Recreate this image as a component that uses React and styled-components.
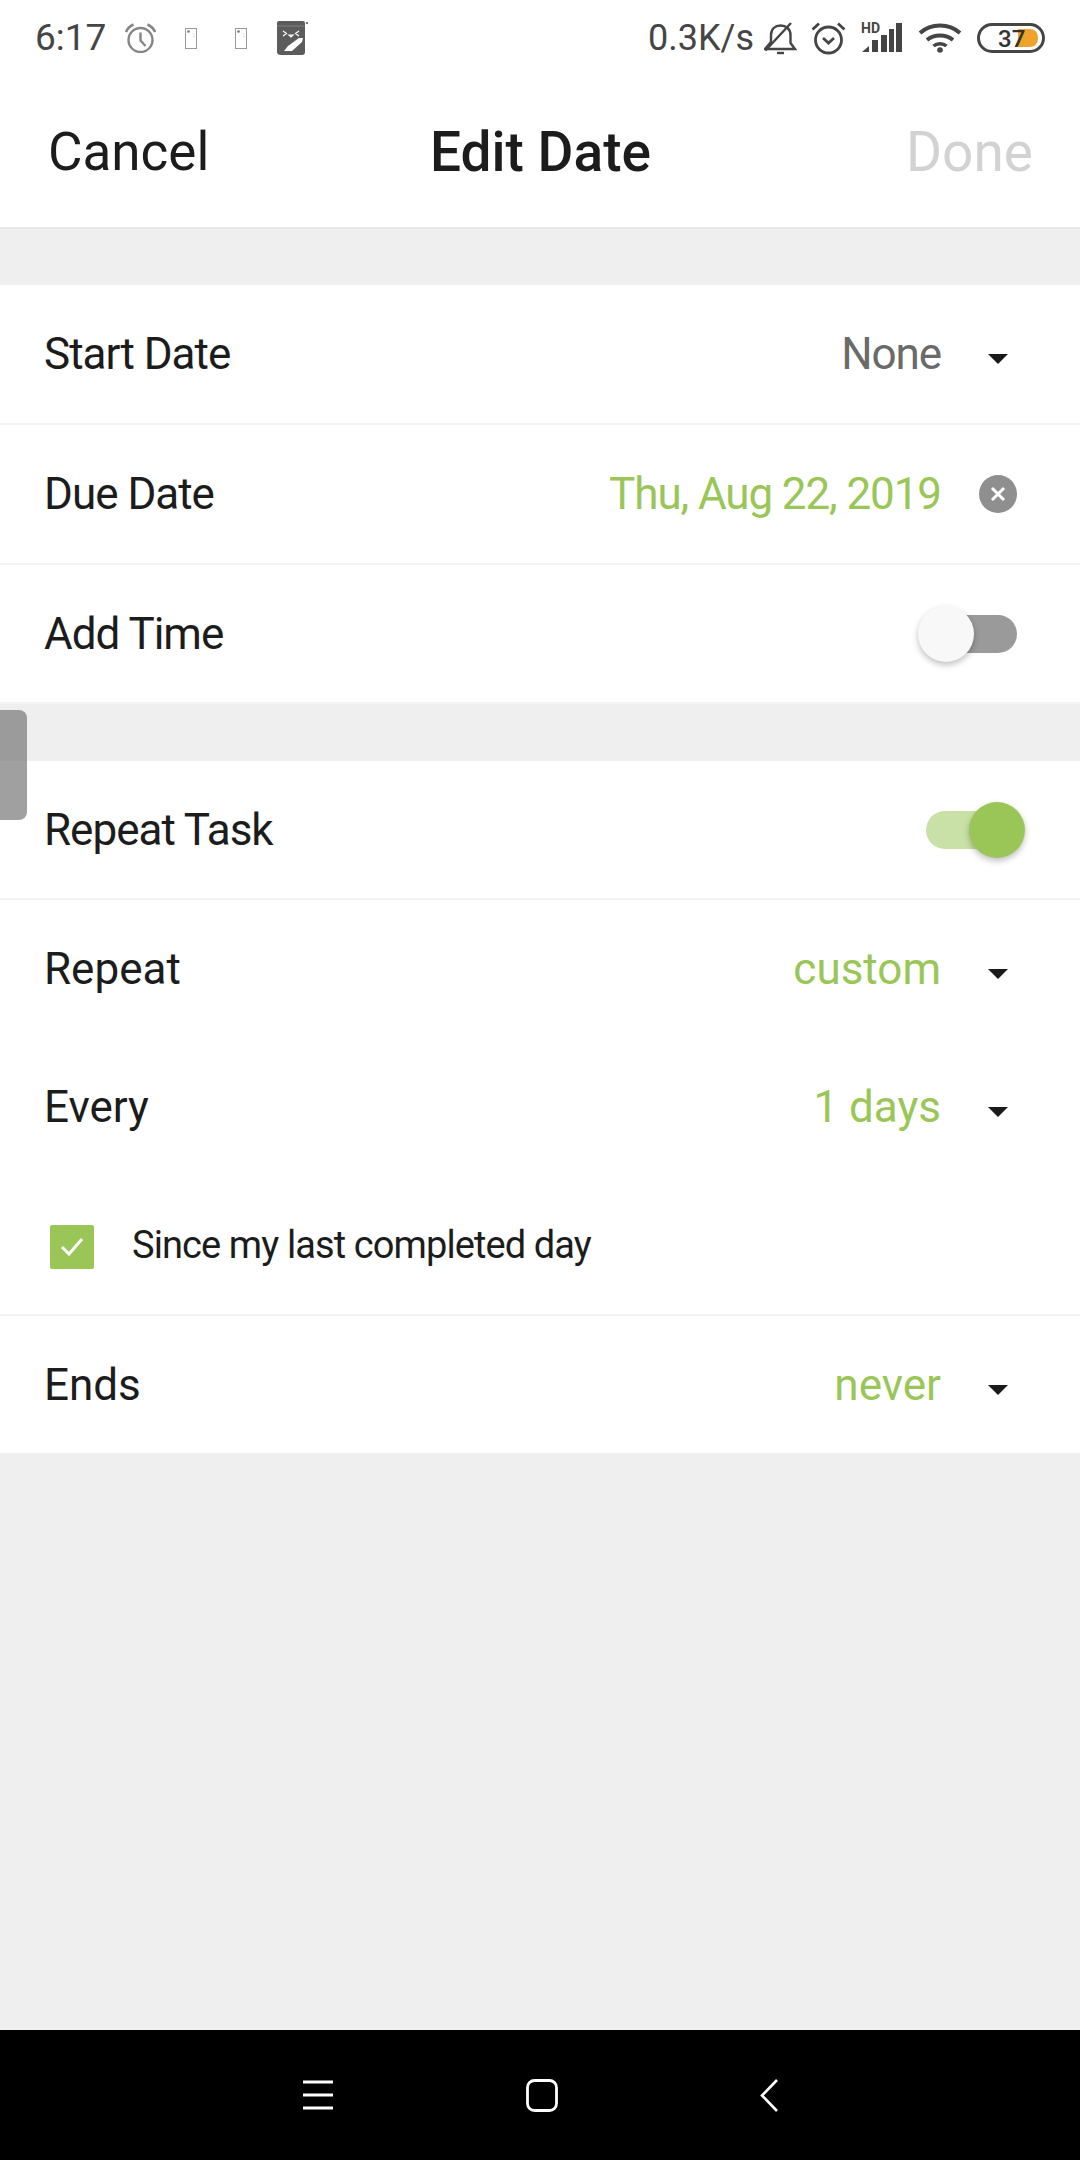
import React from "react";
import styled, { createGlobalStyle } from "styled-components";

const Global = createGlobalStyle`
  html, body { margin: 0; padding: 0; background: #efefef; }
  * { box-sizing: border-box; }
`;

const Page = styled.div`
  position: relative;
  width: 1080px;
  height: 2160px;
  display: flex;
  flex-direction: column;
  background: #efefef;
  font-family: Roboto, "Liberation Sans", sans-serif;
  color: #1c1c1c;
  overflow: hidden;
`;

const StatusBar = styled.div`
  height: 76px;
  background: #fff;
  display: flex;
  align-items: center;
  justify-content: space-between;
  padding: 0 35px 0 35px;
  color: #454545;
`;

const StatusGroup = styled.div`
  display: flex;
  align-items: center;
`;

const StatusText = styled.span`
  font-size: ${(p) => p.$size || 36}px;
  line-height: 76px;
`;

const Glyph = styled.svg`
  display: block;
  flex: none;
  margin-left: ${(p) => p.$ml || 0}px;
  margin-top: ${(p) => p.$mt || 0}px;
`;

const Header = styled.div`
  height: 153px;
  background: #fff;
  border-bottom: 2px solid #e9e9e9;
  display: grid;
  grid-template-columns: 1fr auto 1fr;
  align-items: center;
  padding: 0 47px 0 48px;
  margin-bottom: 56px;
`;

const HeaderButton = styled.span`
  color: ${(p) => (p.$disabled ? "#d2d2d2" : "#1c1c1c")};
  font-size: ${(p) => (p.$disabled ? 55 : 53)}px;
  justify-self: ${(p) => (p.$disabled ? "end" : "start")};
`;

const HeaderTitle = styled.span`
  font-weight: 500;
  font-size: 55px;
  color: #1c1c1c;
`;

const Section = styled.div`
  background: #fff;
  margin-bottom: ${(p) => p.$gap || 0}px;
`;

const Row = styled.div`
  height: ${(p) => p.$h || 139}px;
  display: flex;
  align-items: center;
  padding: 0 52px 0 44px;
  border-bottom: ${(p) => (p.$line ? "2px solid #f3f3f3" : "none")};
`;

const Label = styled.span`
  flex: 1;
  font-size: 44px;
  letter-spacing: ${(p) => (p.$tight ? "-1px" : "0")};
  color: #1c1c1c;
`;

const Value = styled.span`
  font-size: 44px;
  letter-spacing: ${(p) => (p.$tight ? "-1.1px" : "0")};
  color: ${(p) => (p.$green ? "#9ac658" : "#6a6a6a")};
`;

const Slot = styled.div`
  width: 60px;
  margin-left: 27px;
  display: flex;
  justify-content: center;
  align-items: center;
`;

const Caret = styled.div`
  width: 0;
  height: 0;
  border-left: 10px solid transparent;
  border-right: 10px solid transparent;
  border-top: 10px solid #1a1a1a;
  margin-top: 10px;
`;

const ClearDot = styled.div`
  width: 38px;
  height: 38px;
  border-radius: 50%;
  background: #8f8f8f;
  display: flex;
  align-items: center;
  justify-content: center;
`;

const Track = styled.div`
  position: relative;
  width: 91px;
  height: 38px;
  margin-right: 11px;
  border-radius: 19px;
  background: ${(p) => (p.$on ? "#c9e1a6" : "#9a9a9a")};
  margin-left: auto;
`;

const Thumb = styled.div`
  position: absolute;
  top: -9px;
  ${(p) => (p.$on ? "right: -8px;" : "left: -8px;")}
  width: 56px;
  height: 56px;
  border-radius: 50%;
  background: ${(p) => (p.$on ? "#9ac658" : "#f8f8f8")};
  box-shadow: 0 3px 6px rgba(0, 0, 0, 0.25);
`;

const CheckBox = styled.div`
  width: 44px;
  height: 44px;
  margin: 3px 0 0 6px;
  border-radius: 2px;
  background: #9ac658;
  display: flex;
  align-items: center;
  justify-content: center;
`;

const CheckLabel = styled.span`
  margin-left: 38px;
  font-size: 38px;
  letter-spacing: -0.9px;
  color: #1c1c1c;
`;

const Filler = styled.div`
  flex: 1;
`;

const NavBar = styled.div`
  height: 130px;
  background: #000;
  display: flex;
  align-items: center;
  justify-content: center;
  gap: 193px;
`;

const BackSlot = styled.div`
  margin-left: 9px;
  display: flex;
`;

const SideHandle = styled.div`
  position: absolute;
  left: 0;
  top: 710px;
  width: 27px;
  height: 110px;
  border-radius: 0 8px 8px 0;
  background: rgba(120, 120, 120, 0.7);
`;

const AlarmGlyph = ({ ml }) => (
  <Glyph $ml={ml} width="33" height="30" viewBox="0 0 33 30" fill="none" stroke="#858585" strokeWidth="2.4">
    <circle cx="16.5" cy="17" r="12" />
    <path d="M16.5 9.5V17.5L21.5 23" />
    <path d="M2 9C3.5 5.5 6 3 9.5 1.5M31 9C29.5 5.5 27 3 23.5 1.5" strokeWidth="2.6" />
  </Glyph>
);

const PhoneGlyph = ({ ml }) => (
  <Glyph $ml={ml} width="12" height="21" viewBox="0 0 12 21" fill="none">
    <rect x="0.5" y="0.5" width="11" height="20" stroke="#9a9a9a" />
    <circle cx="3.5" cy="3.5" r="1.3" fill="#777" />
    <path d="M8 5.5L9 6.5M8.5 8L9.5 9" stroke="#bbb" />
  </Glyph>
);

const StickerGlyph = ({ ml }) => (
  <Glyph $ml={ml} width="32" height="36" viewBox="0 0 32 36">
    <path d="M3 1H27Q29 1 29 3V32Q29 35 26 35H5Q1 35 1 32V3Q1 1 3 1Z" fill="#5c5c5c" />
    <path d="M1 6H29" stroke="#8a8a8a" strokeWidth="0.8" />
    <path d="M7 11L10.5 13.5L7 16M23 11L19.5 13.5L23 16M13 15H17L15 17Z" stroke="#fff" strokeWidth="1.2" fill="none" />
    <path d="M8 31L12 26L23 18L27 18L26 22L16 31Z" fill="#fff" />
    <path d="M30 2L32 4M32 2L30 4" stroke="#777" />
  </Glyph>
);

const MuteGlyph = ({ ml }) => (
  <Glyph $ml={ml} width="33" height="33" viewBox="0 0 33 33" fill="none" stroke="#454545" strokeWidth="2.4">
    <path d="M1 27H31L26.5 21V13C26.5 7 22 3.5 16.5 3.5C11 3.5 7 7 7 13V20L1 27Z" />
    <path d="M1.5 28.5L27 1" />
    <path d="M13 31H20" />
  </Glyph>
);

const AlarmOnGlyph = ({ ml }) => (
  <Glyph $ml={ml} width="35" height="34" viewBox="0 0 35 34" fill="none" stroke="#454545" strokeWidth="2.8">
    <circle cx="17.5" cy="19" r="13" />
    <path d="M12 17L17.5 22L23 17" />
    <path d="M1.5 8.5L8 2.5M33.5 8.5L27 2.5" />
  </Glyph>
);

const SignalGlyph = ({ ml }) => (
  <Glyph $ml={ml} $mt={-8} width="42" height="38" viewBox="0 -8 42 38">
    <path d="M1 29L8 23V29ZM11 29V17H17V29ZM20 29V12H26V29ZM28 29V6H33V29ZM35 29V0H41V29Z" fill="#454545" />
    <text x="0" y="10" fontFamily="Roboto, sans-serif" fontSize="14" fontWeight="700" fill="#454545">HD</text>
  </Glyph>
);

const WifiGlyph = ({ ml }) => (
  <Glyph $ml={ml} width="44" height="30" viewBox="0 0 44 30" fill="none" stroke="#454545" strokeWidth="4">
    <path d="M2 10C13 0 31 0 42 10" />
    <path d="M9 17C16 11 28 11 35 17" />
    <path d="M15.5 23C19 20 25 20 28.5 23" strokeWidth="3.5" />
    <circle cx="22" cy="27" r="2.8" fill="#454545" stroke="none" />
  </Glyph>
);

const BatteryGlyph = ({ ml }) => (
  <Glyph $ml={ml} width="68" height="30" viewBox="0 0 68 30" fill="none">
    <path d="M41 6H52Q61 6 61 15Q61 24 52 24H41Z" fill="#efa32a" />
    <rect x="1.5" y="1.5" width="65" height="27" rx="13.5" stroke="#454545" strokeWidth="3" />
    <text x="21" y="24" fontFamily="Roboto, sans-serif" fontSize="24" fontWeight="500" fill="#333">37</text>
  </Glyph>
);

const CloseGlyph = () => (
  <svg width="16" height="16" viewBox="0 0 16 16" fill="none" stroke="#fff" strokeWidth="3">
    <path d="M2 2L14 14M14 2L2 14" />
  </svg>
);

const CheckGlyph = () => (
  <svg width="24" height="22" viewBox="0 0 24 22" fill="none" stroke="#fff" strokeWidth="3">
    <path d="M2 11L9 18L22 3" />
  </svg>
);

const MenuGlyph = () => (
  <svg width="30" height="30" viewBox="0 0 30 30" fill="none" stroke="#fff" strokeWidth="2.8">
    <path d="M0 2H30M0 15H30M0 28H30" />
  </svg>
);

const HomeGlyph = () => (
  <svg width="32" height="33" viewBox="0 0 32 33" fill="none" stroke="#fff" strokeWidth="2.8">
    <rect x="1.5" y="1.5" width="29" height="30" rx="7" />
  </svg>
);

const BackGlyph = () => (
  <svg width="18" height="33" viewBox="0 0 18 33" fill="none" stroke="#fff" strokeWidth="2.6">
    <path d="M17 1L2 16.5L17 32" />
  </svg>
);

const SelectRow = ({ label, value, green, tight, line, h }) => (
  <Row $line={line} $h={h}>
    <Label $tight={tight}>{label}</Label>
    <Value $green={green} $tight={tight}>{value}</Value>
    <Slot>
      <Caret />
    </Slot>
  </Row>
);

const ToggleRow = ({ label, on, line, h }) => (
  <Row $line={line} $h={h}>
    <Label $tight>{label}</Label>
    <Track $on={on}>
      <Thumb $on={on} />
    </Track>
  </Row>
);

export default function App() {
  return (
    <Page>
      <Global />
      <StatusBar>
        <StatusGroup>
          <StatusText $size={37}>6:17</StatusText>
          <AlarmGlyph ml={18} />
          <PhoneGlyph ml={28} />
          <PhoneGlyph ml={38} />
          <StickerGlyph ml={29} />
        </StatusGroup>
        <StatusGroup>
          <StatusText>0.3K/s</StatusText>
          <MuteGlyph ml={10} />
          <AlarmOnGlyph ml={14} />
          <SignalGlyph ml={15} />
          <WifiGlyph ml={15} />
          <BatteryGlyph ml={15} />
        </StatusGroup>
      </StatusBar>
      <Header>
        <HeaderButton>Cancel</HeaderButton>
        <HeaderTitle>Edit Date</HeaderTitle>
        <HeaderButton $disabled>Done</HeaderButton>
      </Header>
      <Section $gap={57}>
        <SelectRow label="Start Date" value="None" tight line h={140} />
        <Row $line $h={140}>
          <Label $tight>Due Date</Label>
          <Value $green $tight>Thu, Aug 22, 2019</Value>
          <Slot>
            <ClearDot>
              <CloseGlyph />
            </ClearDot>
          </Slot>
        </Row>
        <ToggleRow label="Add Time" line h={139} />
      </Section>
      <Section>
        <ToggleRow label="Repeat Task" on line />
        <SelectRow label="Repeat" value="custom" green h={138} />
        <SelectRow label="Every" value="1 days" green h={138} />
        <Row $line $h={140}>
          <CheckBox>
            <CheckGlyph />
          </CheckBox>
          <CheckLabel>Since my last completed day</CheckLabel>
        </Row>
        <SelectRow label="Ends" value="never" green h={137} />
      </Section>
      <Filler />
      <NavBar>
        <MenuGlyph />
        <HomeGlyph />
        <BackSlot>
          <BackGlyph />
        </BackSlot>
      </NavBar>
      <SideHandle />
    </Page>
  );
}
